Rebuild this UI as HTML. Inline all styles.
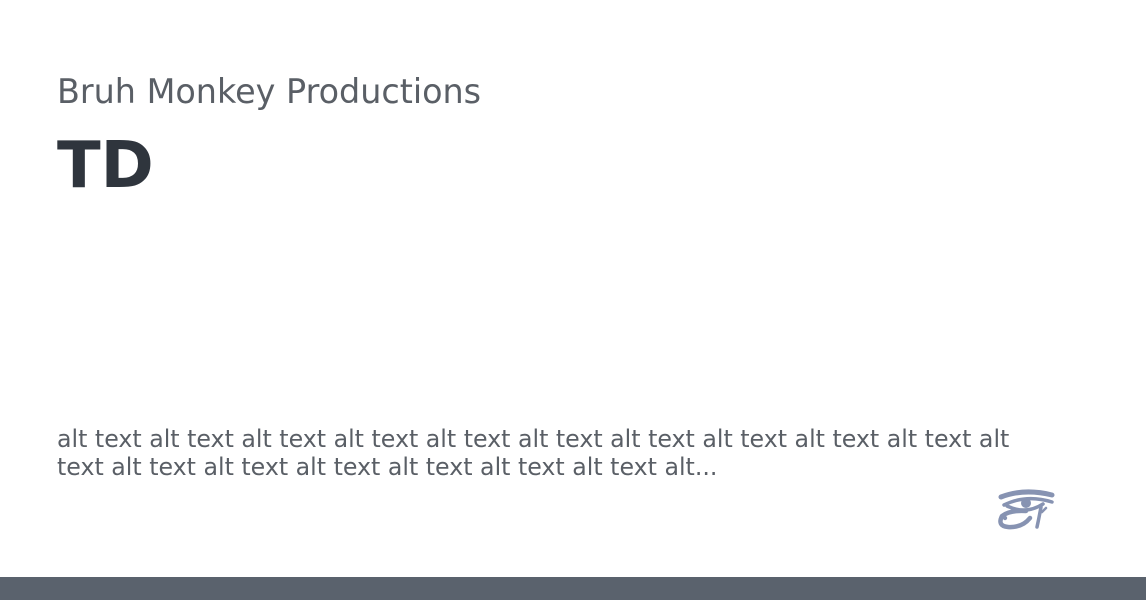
<!DOCTYPE html>
<html><head><style>
body{margin:0;width:1146px;height:600px;background:#fff;position:relative;overflow:hidden;font-family:"DejaVu Sans","Liberation Sans",sans-serif}
.s{position:absolute;left:57px;top:72px;font-size:33.4px;color:#5a5f66;line-height:40px;white-space:nowrap}
.t{position:absolute;left:57px;top:128px;font-size:64px;font-weight:bold;color:#2f353d;line-height:76px}
.a{position:absolute;left:57px;top:425px;width:990px;font-size:23.7px;line-height:28px;color:#5a5f66}
.bar{position:absolute;left:0;bottom:0;width:1146px;height:23px;background:#5a626d}
</style></head><body>
<div class="s">Bruh Monkey Productions</div>
<div class="t">TD</div>
<div class="a">alt text alt text alt text alt text alt text alt text alt text alt text alt text alt text alt text alt text alt text alt text alt text alt text alt text alt...</div>
<svg style="position:absolute;left:996px;top:488px" width="60" height="44" viewBox="0 0 60 44">
<g fill="none" stroke="#8793b2" stroke-linecap="round" stroke-linejoin="round">
<path d="M5 9 Q28 0 56 7" stroke-width="5"/>
<path d="M8 17 Q30 6 56 14" stroke-width="3.5"/>
<path d="M11 18 Q30 27 47 16" stroke-width="3.5"/>
<path d="M30 23 Q14 22 6 28 Q1 38 12 39 Q26 40 34 30" stroke-width="4.5"/>
<path d="M45 19 Q43 30 41 39" stroke-width="3.5"/>
<path d="M46 24 L50 20" stroke-width="2.5"/>
</g>
<circle cx="30" cy="15" r="5" fill="#8793b2"/>
<circle cx="9" cy="30" r="2.2" fill="#8793b2"/>
</svg>
<div class="bar"></div>
</body></html>
